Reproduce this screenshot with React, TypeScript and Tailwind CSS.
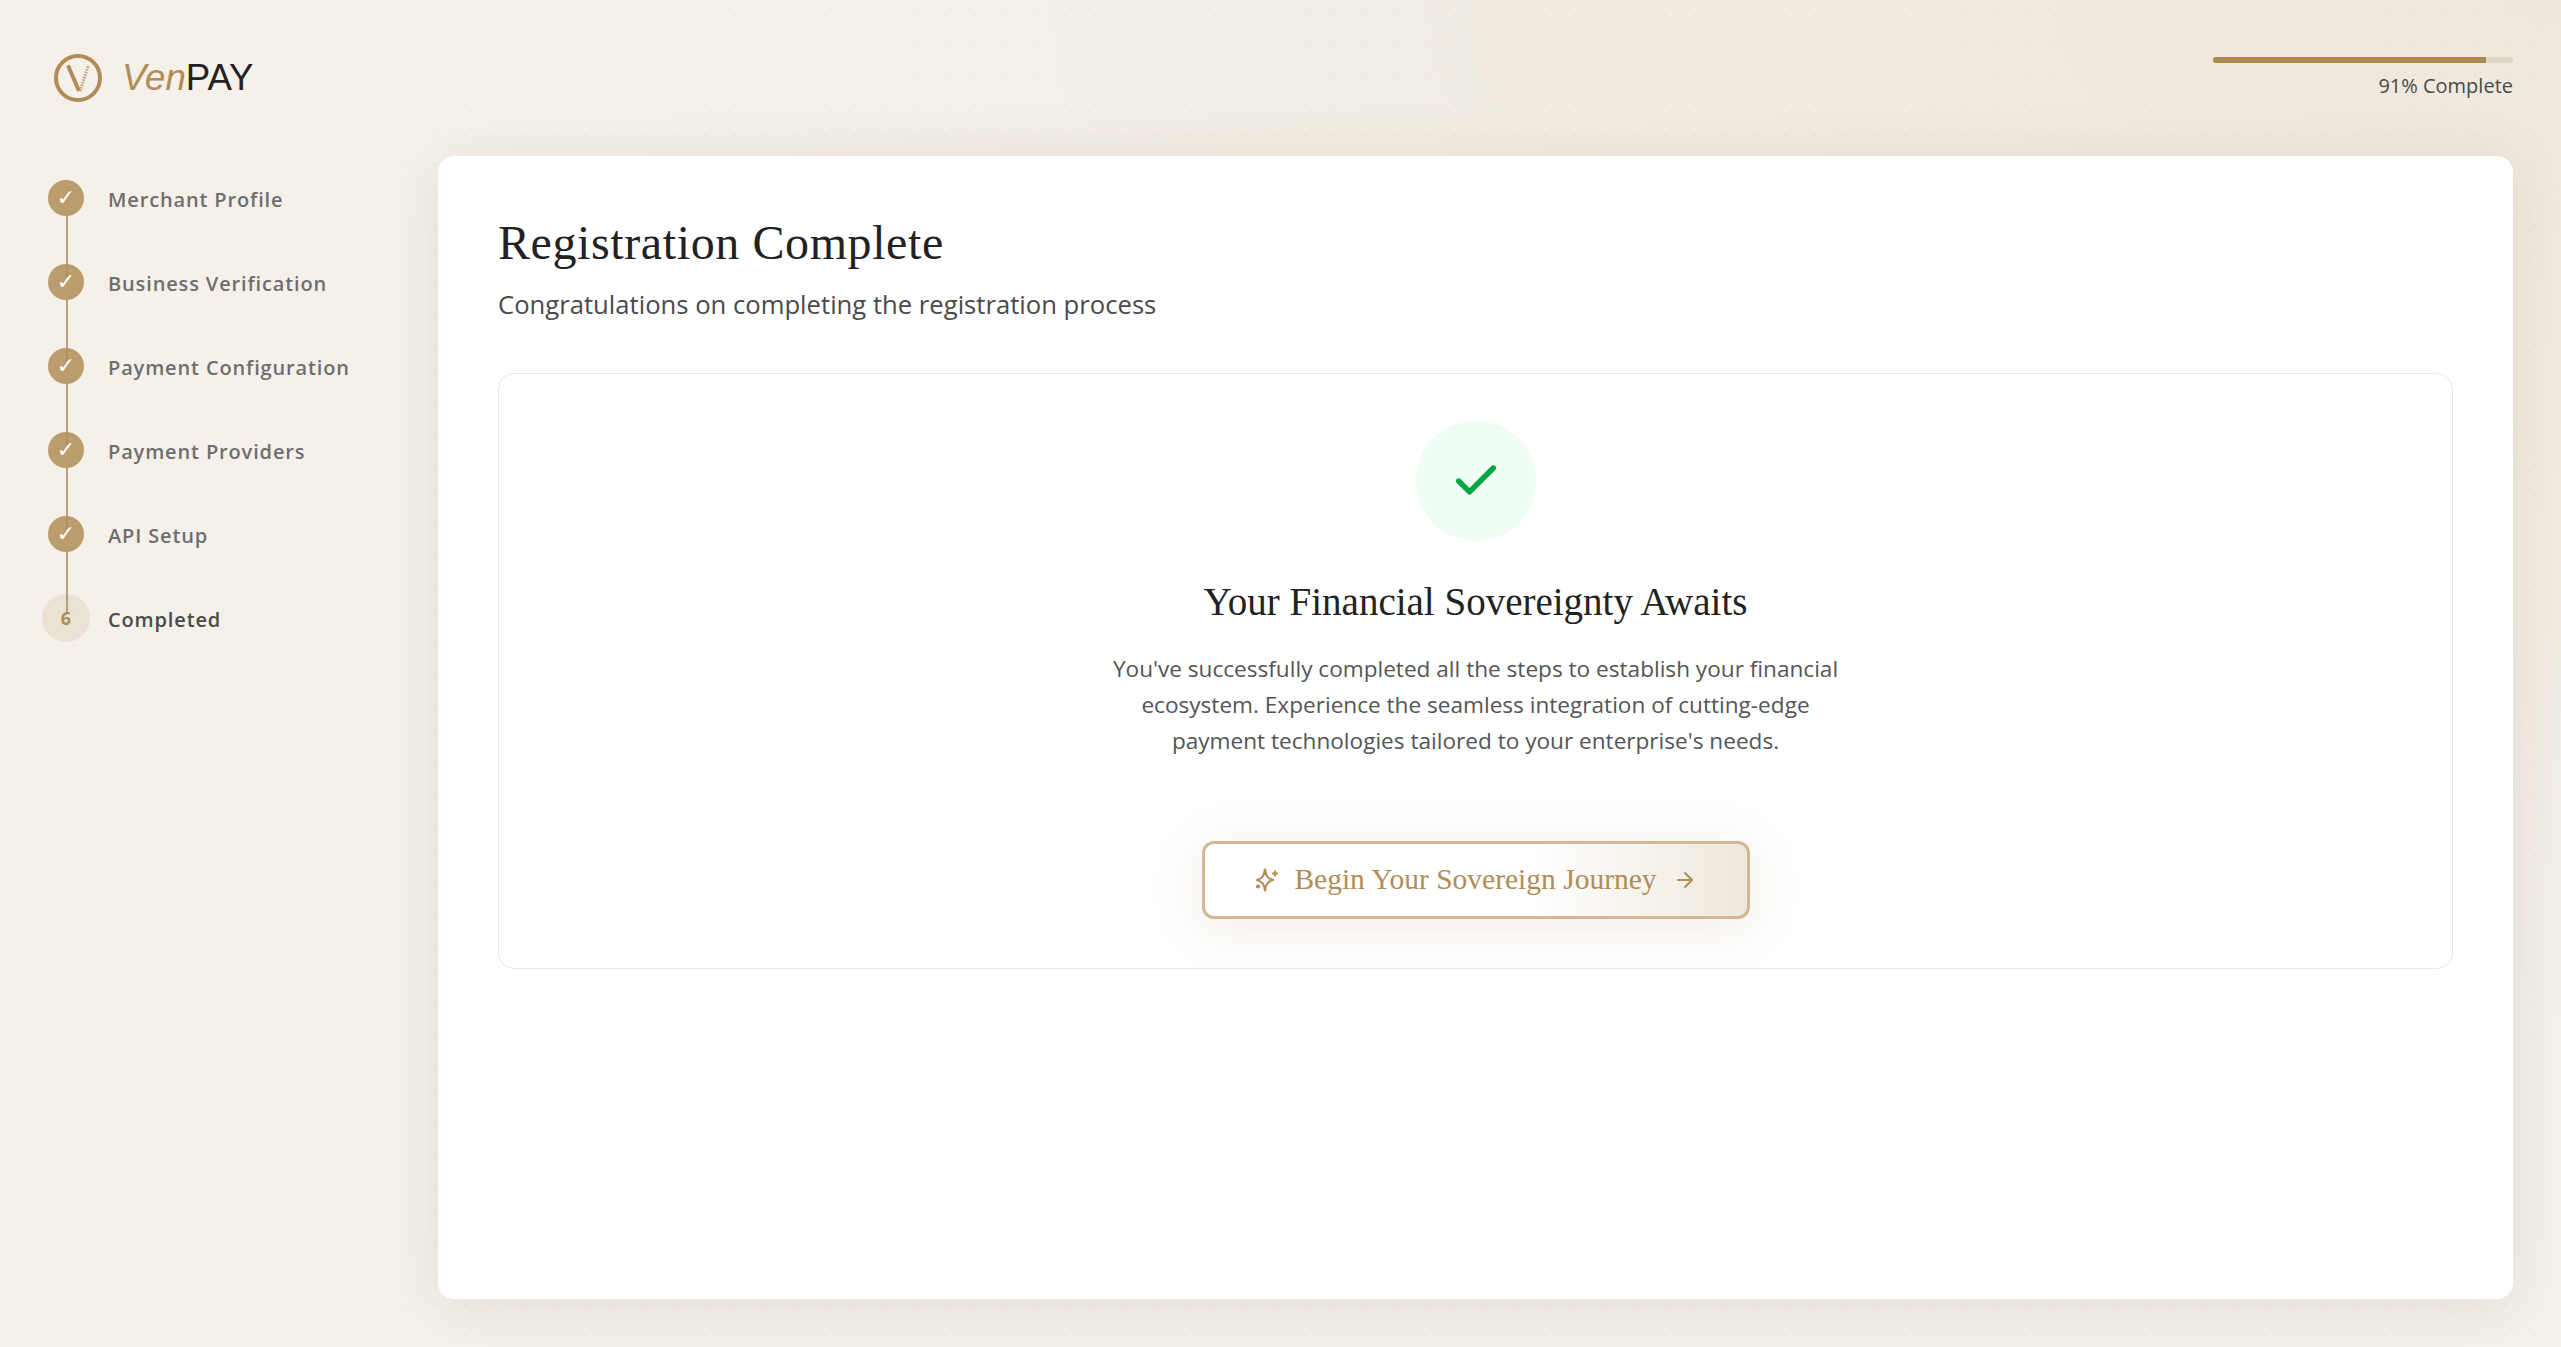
import { ArrowRight, Check } from "lucide-react";

const STEPS = ["Merchant Profile", "Business Verification", "Payment Configuration", "Payment Providers", "API Setup"];

function Logo() {
  return (
    <svg width="48" height="48" viewBox="0 0 48 48" fill="none" className="shrink-0">
      <circle cx="24" cy="24" r="22" stroke="#b08d57" strokeWidth="4" />
      <path d="M14 11.5L25 37" stroke="#b08d57" strokeWidth="4" />
      <path d="M26 37L34.5 11" stroke="#b08d57" strokeWidth="3" strokeDasharray="1.4 1.3" opacity="0.85" />
    </svg>
  );
}

function Sparkle() {
  return (
    <svg width="24" height="24" viewBox="0 0 24 24" fill="none" stroke="currentColor" strokeWidth="2.2" strokeLinecap="round" strokeLinejoin="round" className="shrink-0 overflow-visible">
      <path d="M11 1.5C11.8 7 13.2 10.5 19 12C13.2 13.5 11.8 17 11 22.5C10.2 17 8.8 13.5 3 12C8.8 10.5 10.2 7 11 1.5Z" />
      <path d="M21 3.5v4M23 5.5h-4" />
      <circle cx="4" cy="18.5" r="1" />
    </svg>
  );
}

function StepDot({ n }: { n?: number }) {
  if (n) {
    return (
      <div className="absolute left-[-6px] top-[-6px] w-12 h-12 rounded-full bg-[#b08d57]/15 flex items-center justify-center text-[18px] font-bold text-[#b08d57]">
        {n}
      </div>
    );
  }
  return (
    <div className="absolute inset-0 rounded-full bg-[#b08d57]/85 flex items-center justify-center font-['DejaVu_Sans',sans-serif] text-[22px] leading-none text-white">
      ✓
    </div>
  );
}

export default function App() {
  return (
    <div className="relative min-h-screen h-[1347px] overflow-hidden bg-[#f5f1ea] font-['Open_Sans','Noto_Sans',sans-serif]">
      {/* soft wash, top right */}
      <div className="absolute inset-0 bg-[radial-gradient(ellipse_at_top_right,#efe8dc_0%,#f5f1ea_55%)]" />
      {/* dotted texture */}
      <div className="absolute inset-0 bg-[radial-gradient(#b08d5714_1px,transparent_1px)] bg-[size:30px_30px]" />

      <div className="relative flex h-full">
        <aside className="w-[438px] shrink-0 pl-[42px] pt-[54px]">
          <div className="flex items-center h-[48px] pl-[12px] gap-[20px]">
            <Logo />
            <span className="font-['Liberation_Sans',sans-serif] text-[36.6px] leading-none text-[#222222]">
              <span className="italic text-[#b08d57]">Ven</span>PAY
            </span>
          </div>

          <ul className="mt-[54px] pl-[6px]">
            {STEPS.concat("Completed").map((label, i) => (
              <li key={label} className="relative flex items-center h-[84px]">
                <div className="relative w-9 h-9 shrink-0">
                  <StepDot n={i === 5 ? 6 : undefined} />
                  {i < 5 && <div className="absolute left-[18px] top-[36px] w-[2px] h-[61px] bg-[#b08d57]/80" />}
                </div>
                <span className={`ml-[24px] pt-[4px] text-[20px] font-[550] tracking-[0.043em] ${i === 5 ? "text-[#4a4a4a]" : "text-[#6e6e6e]"}`}>
                  {label}
                </span>
              </li>
            ))}
          </ul>
        </aside>

        <main className="flex-1 pr-[48px] flex flex-col">
          <div className="h-[156px] flex flex-col items-end pt-[57px]">
            <div className="w-[300px] h-[6px] rounded-full bg-[#e0d6c5] overflow-hidden">
              <div className="h-full w-[91%] bg-[#ad8a54]" />
            </div>
            <div className="mt-[8px] text-[20px] text-[#4a4a4a] leading-[30px]">91% Complete</div>
          </div>

          <div className="w-[2075px] h-[1143px] bg-white rounded-2xl shadow-[0_8px_60px_rgba(120,100,70,0.14)] px-[60px] pt-[58px]">
            <h1 className="font-['Liberation_Serif',serif] text-[48px] tracking-[0.6px] leading-[1.2] text-[#222222]">Registration Complete</h1>
            <p className="mt-[14px] text-[25.65px] leading-[38px] text-[#4a4a4a]">Congratulations on completing the registration process</p>

            <div className="mt-[49px] h-[596px] rounded-2xl border border-[#e8e8e8] flex flex-col items-center pt-[47px]">
              <div className="w-[120px] h-[120px] rounded-full bg-[#f0fdf4] flex items-center justify-center">
                <Check className="w-[52px] h-[52px] text-[#00a63e]" strokeWidth={2.5} />
              </div>
              <h2 className="mt-[33px] font-['Liberation_Serif',serif] text-[39px] leading-[56px] text-[#222222]">Your Financial Sovereignty Awaits</h2>
              <p className="mt-[21px] w-[750px] text-center text-[22.6px] leading-[36px] text-[#555555]">
                You've successfully completed all the steps to establish your financial ecosystem. Experience the seamless integration of cutting-edge payment technologies tailored to your enterprise's needs.
              </p>
              <button className="mt-[82px] w-[548px] h-[78px] rounded-xl border-[3px] border-[#d0b896] bg-gradient-to-r from-white from-60% to-[#efe8dc] shadow-[0_8px_50px_rgba(176,141,87,0.17)] flex items-center justify-center gap-[16px] text-[#b08d57]">
                <Sparkle />
                <span className="font-['Liberation_Serif',serif] text-[29.5px]">Begin Your Sovereign Journey</span>
                <ArrowRight className="w-6 h-6" strokeWidth={2} />
              </button>
            </div>
          </div>
        </main>
      </div>
    </div>
  );
}
